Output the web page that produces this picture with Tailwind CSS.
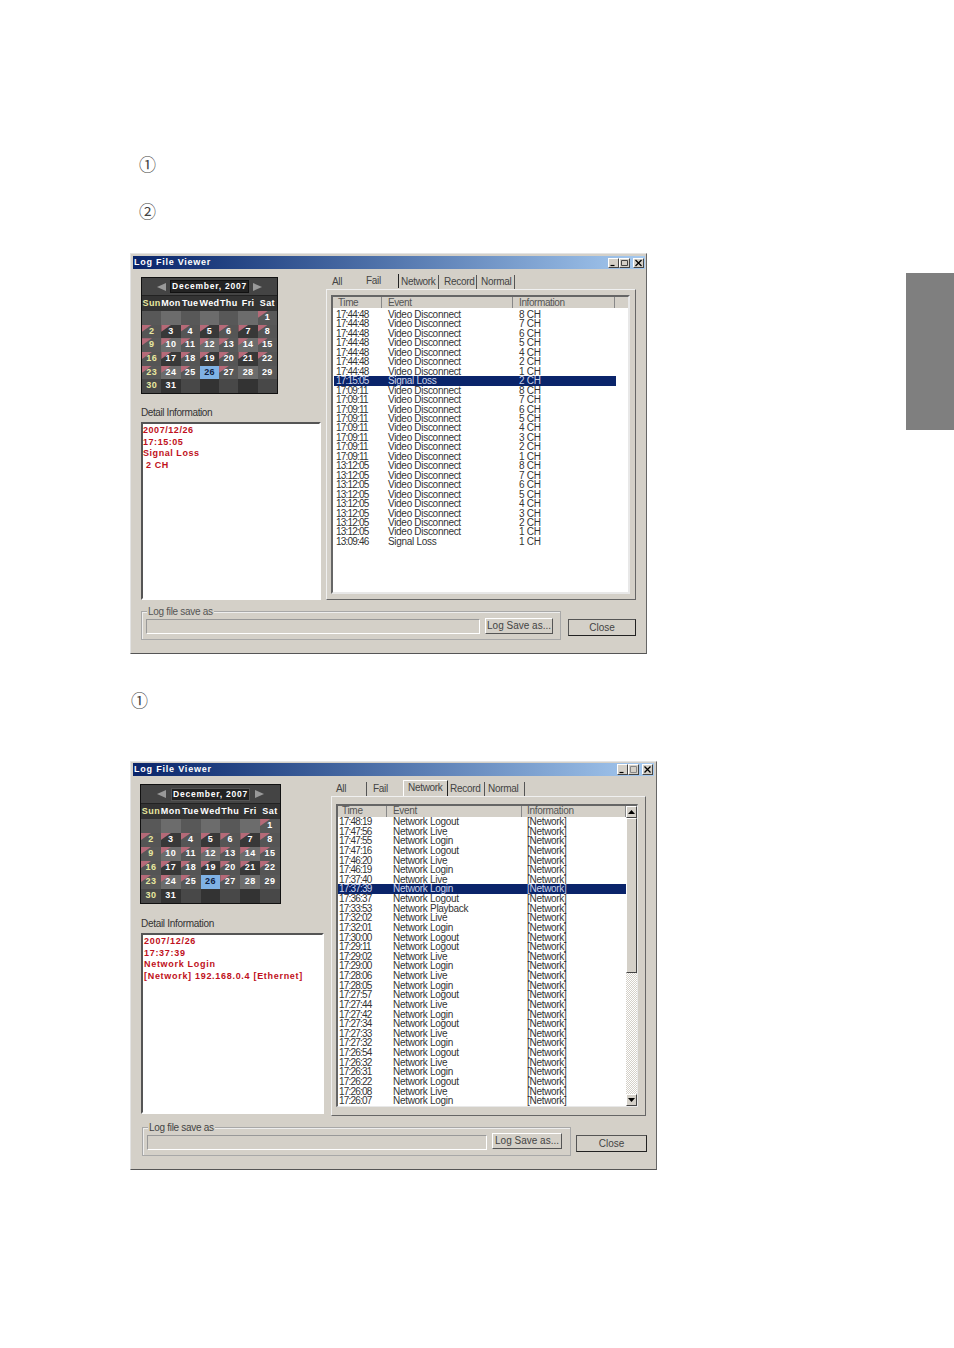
<!DOCTYPE html>
<html>
<head>
<meta charset="utf-8">
<script src="https://cdn.jsdelivr.net/npm/@tailwindcss/browser@4"></script>
<title>Log File Viewer</title>
</head>
<body class="bg-white">
<main class="relative w-[954px] h-[1348px] overflow-hidden pl-[130px] pt-[155px] font-['Liberation_Sans','Noto_Sans_CJK_JP',sans-serif] text-[10px] text-[#333]">

<aside class="absolute left-[906px] top-[273px] w-[48px] h-[157px] bg-[#7f7f7f]"></aside>

<div class="h-[22px] leading-[22px] pl-[9px] text-[17px] text-[#444]">①</div>
<div class="mt-[25px] h-[22px] leading-[22px] pl-[9px] text-[17px] text-[#444]">②</div>

<!-- WINDOW 1 -->
<section class="mt-[29px] w-[517px] h-[401px] bg-[#d4d0c8] border border-t-[#e4e4e4] border-l-[#e4e4e4] border-r-[#666] border-b-[#555] pt-[2px] pl-[2px] pr-[1px]">
  <header class="h-[13px] w-[512px] flex items-center justify-between pl-[1px] pr-[1px] bg-gradient-to-r from-[#0a246a] to-[#a6caf0] text-white text-[9px] leading-[13px] font-bold tracking-[0.75px]">
    <span>Log File Viewer</span>
    <div class="flex">
      <svg class="bg-[#d4d0c8] border border-t-white border-l-white border-r-[#444] border-b-[#444]" width="11" height="10" viewBox="0 0 9 8"><path d="M1.5 6.5h4" stroke="#000" stroke-width="1.2"/></svg>
      <svg class="bg-[#d4d0c8] border border-t-white border-l-white border-r-[#444] border-b-[#444]" width="11" height="10" viewBox="0 0 9 8"><path d="M1.5 1.5h6v5h-6z" fill="none" stroke="#444" stroke-width="1"/></svg>
      <svg class="ml-[3px] bg-[#d4d0c8] border border-t-white border-l-white border-r-[#444] border-b-[#444]" width="11" height="10" viewBox="0 0 9 8"><path d="M1.5 1l6 6M7.5 1l-6 6" stroke="#000" stroke-width="1.3"/></svg>
    </div>
  </header>

  <div class="flex gap-[5px] pl-[8px] pt-[6px]">
    <div class="w-[180px]">
      <div class="mt-[2px] w-[137px] h-[117px] border border-[#111] bg-[#333] grid grid-cols-7 grid-rows-[18px_15px_repeat(6,1fr)] text-white font-bold text-[9px] tracking-[0.35px] [&>div]:relative [&>div]:flex [&>div]:items-center [&>div]:justify-center [&>div]:whitespace-nowrap [&_i]:absolute [&_i]:left-0 [&_i]:top-0 [&_i]:w-[10px] [&_i]:h-[7px] [&_i]:bg-[#b56a78] [&_i]:[clip-path:polygon(0_0,100%_0,0_100%)]">
        <div class="col-span-7 gap-[4px] bg-[#444] border-b border-[#222] text-[8.5px]">
          <svg width="9" height="8" viewBox="0 0 9 8"><path d="M0 4l9-4v8z" fill="#999"/></svg>
          <span class="bg-[#222] border border-[#111] px-[1px] leading-[11px] tracking-[0.75px]">December, 2007</span>
          <svg width="9" height="8" viewBox="0 0 9 8"><path d="M9 4L0 0v8z" fill="#999"/></svg>
        </div>
        <div class="text-[#e8e8a0]">Sun</div><div>Mon</div><div>Tue</div><div>Wed</div><div>Thu</div><div>Fri</div><div>Sat</div>
        <div class="bg-[#585858]"></div><div class="bg-[#6c6c6c]"></div><div class="bg-[#585858]"></div><div class="bg-[#6c6c6c]"></div><div class="bg-[#585858]"></div><div class="bg-[#6c6c6c]"></div><div class="bg-[#585858]"><i></i>1</div>
        <div class="bg-[#555] text-[#e8e8a0]"><i></i>2</div><div class="bg-[#383838]"><i></i>3</div><div class="bg-[#555]"><i></i>4</div><div class="bg-[#383838]"><i></i>5</div><div class="bg-[#555]"><i></i>6</div><div class="bg-[#383838]"><i></i>7</div><div class="bg-[#555]"><i></i>8</div>
        <div class="bg-[#585858] text-[#e8e8a0]"><i></i>9</div><div class="bg-[#6c6c6c]"><i></i>10</div><div class="bg-[#585858]"><i></i>11</div><div class="bg-[#6c6c6c]"><i></i>12</div><div class="bg-[#585858]"><i></i>13</div><div class="bg-[#6c6c6c]"><i></i>14</div><div class="bg-[#585858]"><i></i>15</div>
        <div class="bg-[#555] text-[#e8e8a0]"><i></i>16</div><div class="bg-[#383838]"><i></i>17</div><div class="bg-[#555]"><i></i>18</div><div class="bg-[#383838]"><i></i>19</div><div class="bg-[#555]"><i></i>20</div><div class="bg-[#383838]"><i></i>21</div><div class="bg-[#555]"><i></i>22</div>
        <div class="bg-[#585858] text-[#e8e8a0]"><i></i>23</div><div class="bg-[#6c6c6c]"><i></i>24</div><div class="bg-[#585858]"><i></i>25</div><div class="bg-[#7fb2e5] text-[#102040]">26</div><div class="bg-[#585858]"><i></i>27</div><div class="bg-[#6c6c6c]">28</div><div class="bg-[#585858]">29</div>
        <div class="bg-[#484848] text-[#e8e8a0]">30</div><div class="bg-[#333]">31</div><div class="bg-[#484848]"></div><div class="bg-[#333]"></div><div class="bg-[#484848]"></div><div class="bg-[#333]"></div><div class="bg-[#484848]"></div>
      </div>
      <div class="mt-[12px] h-[12px] leading-[12px] tracking-[-0.4px] translate-y-[1px]">Detail Information</div>
      <div class="mt-[4px] h-[178px] border-2 border-t-[#555] border-l-[#555] border-r-white border-b-white bg-white pt-[1px] text-[#c01020] font-bold text-[9px] leading-[11.7px] tracking-[0.55px]">
        <p>2007/12/26</p><p>17:15:05</p><p>Signal Loss</p><p>&nbsp;2 CH</p>
      </div>
    </div>

    <div class="w-[310px]">
      <nav class="h-[14px] flex leading-[14px] [&>span]:h-[14px] text-[#444] tracking-[-0.3px]">
        <span class="w-[34px] pl-[6px]">All</span>
        <span class="w-[39px] pl-[6px] border-r border-[#222] -mt-[1px]">Fail</span>
        <span class="w-[40px] pl-[2px] border-r border-[#555]">Network</span>
        <span class="w-[38px] pl-[5px] border-r border-[#555]">Record</span>
        <span class="w-[38px] pl-[4px] border-r border-[#555]">Normal</span>
      </nav>
      <div class="h-[311px] border border-t-[#f0f0f0] border-l-[#f0f0f0] border-r-[#666] border-b-[#666] pl-[4px] pt-[5px]">
        <div class="w-[299px] h-[299px] bg-white border-2 border-t-[#666] border-l-[#666] border-r-[#e8e8e8] border-b-[#e8e8e8] overflow-hidden">
          <div class="h-[11px] grid grid-cols-[49px_131px_102px_1fr] leading-[11px] bg-[#d4d0c8] text-[#555] tracking-[-0.4px] [&>div]:border-r [&>div]:border-[#888]">
            <div class="pl-[5px]">Time</div><div class="pl-[6px]">Event</div><div class="pl-[6px]">Information</div><div class="border-r-0!"></div>
          </div>
          <div class="mt-[2px] ml-[1px] w-[282px] grid grid-cols-[54px_131px_1fr] auto-rows-[9.46px] leading-[9.46px] tracking-[-0.3px] [&_time]:block [&_time]:pl-[2px] [&_time]:tracking-[-0.8px]">
            <div><time>17:44:48</time></div><div>Video Disconnect</div><div>8 CH</div>
            <div><time>17:44:48</time></div><div>Video Disconnect</div><div>7 CH</div>
            <div><time>17:44:48</time></div><div>Video Disconnect</div><div>6 CH</div>
            <div><time>17:44:48</time></div><div>Video Disconnect</div><div>5 CH</div>
            <div><time>17:44:48</time></div><div>Video Disconnect</div><div>4 CH</div>
            <div><time>17:44:48</time></div><div>Video Disconnect</div><div>2 CH</div>
            <div><time>17:44:48</time></div><div>Video Disconnect</div><div>1 CH</div>
            <div class="col-span-3 grid grid-cols-subgrid bg-[#0a246a] text-[#c8d0e8]"><div><time>17:15:05</time></div><div>Signal Loss</div><div>2 CH</div></div>
            <div><time>17:09:11</time></div><div>Video Disconnect</div><div>8 CH</div>
            <div><time>17:09:11</time></div><div>Video Disconnect</div><div>7 CH</div>
            <div><time>17:09:11</time></div><div>Video Disconnect</div><div>6 CH</div>
            <div><time>17:09:11</time></div><div>Video Disconnect</div><div>5 CH</div>
            <div><time>17:09:11</time></div><div>Video Disconnect</div><div>4 CH</div>
            <div><time>17:09:11</time></div><div>Video Disconnect</div><div>3 CH</div>
            <div><time>17:09:11</time></div><div>Video Disconnect</div><div>2 CH</div>
            <div><time>17:09:11</time></div><div>Video Disconnect</div><div>1 CH</div>
            <div><time>13:12:05</time></div><div>Video Disconnect</div><div>8 CH</div>
            <div><time>13:12:05</time></div><div>Video Disconnect</div><div>7 CH</div>
            <div><time>13:12:05</time></div><div>Video Disconnect</div><div>6 CH</div>
            <div><time>13:12:05</time></div><div>Video Disconnect</div><div>5 CH</div>
            <div><time>13:12:05</time></div><div>Video Disconnect</div><div>4 CH</div>
            <div><time>13:12:05</time></div><div>Video Disconnect</div><div>3 CH</div>
            <div><time>13:12:05</time></div><div>Video Disconnect</div><div>2 CH</div>
            <div><time>13:12:05</time></div><div>Video Disconnect</div><div>1 CH</div>
            <div><time>13:09:46</time></div><div>Signal Loss</div><div>1 CH</div>
          </div>
        </div>
      </div>
    </div>
  </div>

  <div class="flex gap-[7px] pl-[8px] mt-[11px]">
    <fieldset class="relative w-[420px] h-[29px] border border-[#a8a8a8] shadow-[inset_1px_1px_0_#eee] flex gap-[5px] pl-[4px] pt-[7px]">
      <span class="absolute left-[5px] -top-[6px] px-[1px] bg-[#d4d0c8] leading-[11px] text-[#555] tracking-[-0.3px]">Log file save as</span>
      <div class="w-[334px] h-[15px] border border-t-[#999] border-l-[#999] border-r-white border-b-white"></div>
      <div class="-mt-[1px] w-[68px] h-[16px] border border-t-white border-l-white border-r-[#555] border-b-[#555] text-center leading-[14px] whitespace-nowrap text-[#444]">Log Save as...</div>
    </fieldset>
    <div class="mt-[8px] w-[68px] h-[17px] border border-[#222] border-t-[#555] border-l-[#555] text-center leading-[15px] text-[#444]">Close</div>
  </div>
</section>

<div class="mt-[37px] ml-[1px] h-[22px] leading-[22px] text-[17px] text-[#444]">①</div>

<!-- WINDOW 2 -->
<section class="mt-[48px] w-[527px] h-[409px] bg-[#d4d0c8] border border-t-[#e4e4e4] border-l-[#e4e4e4] border-r-[#666] border-b-[#555] pt-[1px] pl-[2px] pr-[1px]">
  <header class="h-[13px] w-[521px] flex items-center justify-between pl-[1px] pr-[1px] bg-gradient-to-r from-[#0a246a] to-[#a6caf0] text-white text-[9px] leading-[13px] font-bold tracking-[0.8px]">
    <span>Log File Viewer</span>
    <div class="flex">
      <svg class="bg-[#d4d0c8] border border-t-white border-l-white border-r-[#444] border-b-[#444]" width="11" height="11" viewBox="0 0 9 9"><path d="M1.5 7.5h4" stroke="#000" stroke-width="1.2"/></svg>
      <svg class="bg-[#d4d0c8] border border-t-white border-l-white border-r-[#444] border-b-[#444]" width="11" height="11" viewBox="0 0 9 9"><path d="M1.5 1.5h6v6h-6z" fill="none" stroke="#888" stroke-width="1"/></svg>
      <svg class="ml-[3px] bg-[#d4d0c8] border border-t-white border-l-white border-r-[#444] border-b-[#444]" width="11" height="11" viewBox="0 0 9 9"><path d="M1.5 1.5l6 6M7.5 1.5l-6 6" stroke="#000" stroke-width="1.3"/></svg>
    </div>
  </header>

  <div class="flex gap-[7px] pl-[7px] pt-[6px]">
    <div class="w-[184px]">
      <div class="mt-[2px] w-[141px] h-[120px] border border-[#111] bg-[#333] grid grid-cols-7 grid-rows-[19px_15px_repeat(6,1fr)] text-white font-bold text-[9px] tracking-[0.5px] [&>div]:relative [&>div]:flex [&>div]:items-center [&>div]:justify-center [&>div]:whitespace-nowrap [&_i]:absolute [&_i]:left-0 [&_i]:top-0 [&_i]:w-[10px] [&_i]:h-[7px] [&_i]:bg-[#b56a78] [&_i]:[clip-path:polygon(0_0,100%_0,0_100%)]">
        <div class="col-span-7 gap-[5px] bg-[#444] border-b border-[#222] text-[8.5px]">
          <svg width="9" height="8" viewBox="0 0 9 8"><path d="M0 4l9-4v8z" fill="#999"/></svg>
          <span class="bg-[#222] border border-[#555] px-[1px] leading-[11px] tracking-[0.75px]">December, 2007</span>
          <svg width="9" height="8" viewBox="0 0 9 8"><path d="M9 4L0 0v8z" fill="#999"/></svg>
        </div>
        <div class="text-[#e8e8a0]">Sun</div><div>Mon</div><div>Tue</div><div>Wed</div><div>Thu</div><div>Fri</div><div>Sat</div>
        <div class="bg-[#585858]"></div><div class="bg-[#6c6c6c]"></div><div class="bg-[#585858]"></div><div class="bg-[#6c6c6c]"></div><div class="bg-[#585858]"></div><div class="bg-[#6c6c6c]"></div><div class="bg-[#585858]"><i></i>1</div>
        <div class="bg-[#555] text-[#e8e8a0]"><i></i>2</div><div class="bg-[#383838]"><i></i>3</div><div class="bg-[#555]"><i></i>4</div><div class="bg-[#383838]"><i></i>5</div><div class="bg-[#555]"><i></i>6</div><div class="bg-[#383838]"><i></i>7</div><div class="bg-[#555]"><i></i>8</div>
        <div class="bg-[#585858] text-[#e8e8a0]"><i></i>9</div><div class="bg-[#6c6c6c]"><i></i>10</div><div class="bg-[#585858]"><i></i>11</div><div class="bg-[#6c6c6c]"><i></i>12</div><div class="bg-[#585858]"><i></i>13</div><div class="bg-[#6c6c6c]"><i></i>14</div><div class="bg-[#585858]"><i></i>15</div>
        <div class="bg-[#555] text-[#e8e8a0]"><i></i>16</div><div class="bg-[#383838]"><i></i>17</div><div class="bg-[#555]"><i></i>18</div><div class="bg-[#383838]"><i></i>19</div><div class="bg-[#555]"><i></i>20</div><div class="bg-[#383838]"><i></i>21</div><div class="bg-[#555]"><i></i>22</div>
        <div class="bg-[#585858] text-[#e8e8a0]"><i></i>23</div><div class="bg-[#6c6c6c]"><i></i>24</div><div class="bg-[#585858]"><i></i>25</div><div class="bg-[#7fb2e5] text-[#102040]">26</div><div class="bg-[#585858]"><i></i>27</div><div class="bg-[#6c6c6c]">28</div><div class="bg-[#585858]">29</div>
        <div class="bg-[#484848] text-[#e8e8a0]">30</div><div class="bg-[#333]">31</div><div class="bg-[#484848]"></div><div class="bg-[#333]"></div><div class="bg-[#484848]"></div><div class="bg-[#333]"></div><div class="bg-[#484848]"></div>
      </div>
      <div class="mt-[13px] ml-[1px] h-[12px] leading-[12px] tracking-[-0.3px] translate-y-[1px]">Detail Information</div>
      <div class="mt-[4px] ml-[1px] w-[183px] h-[181px] border-2 border-t-[#555] border-l-[#555] border-r-white border-b-white bg-white pl-[1px] pt-[1px] text-[#c01020] font-bold text-[9px] leading-[11.7px] tracking-[0.7px]">
        <p>2007/12/26</p><p>17:37:39</p><p>Network Login</p><p>[Network] 192.168.0.4 [Ethernet]</p>
      </div>
    </div>

    <div class="w-[315px]">
      <nav class="h-[14px] flex leading-[14px] [&>span]:h-[14px] text-[#444] tracking-[-0.3px]">
        <span class="w-[36px] pl-[5px] border-r border-[#555]">All</span>
        <span class="w-[36px] pl-[6px]">Fail</span>
        <span class="w-[45px] h-[16px]! -mt-[2px] pl-[4px] border-t border-l border-r border-t-white border-l-white border-r-[#222] bg-[#d4d0c8] relative z-10">Network</span>
        <span class="w-[37px] pl-[2px] border-r border-[#555]">Record</span>
        <span class="w-[40px] pl-[3px] border-r border-[#555]">Normal</span>
      </nav>
      <div class="h-[320px] border border-t-[#f0f0f0] border-l-[#f0f0f0] border-r-[#666] border-b-[#666] pl-[4px] pt-[7px]">
        <div class="w-[302px] h-[303px] flex bg-white border-2 border-t-[#666] border-l-[#666] border-r-[#e8e8e8] border-r-1 border-b-1 border-b-[#e8e8e8] overflow-hidden">
          <div class="w-[288px] shrink-0 overflow-hidden">
            <div class="h-[11px] grid grid-cols-[49px_135px_104px] leading-[10px] bg-[#d4d0c8] text-[#555] tracking-[-0.3px] [&>div]:border-r [&>div]:border-[#888]">
              <div class="pl-[4px]">Time</div><div class="pl-[6px]">Event</div><div class="pl-[5px]">Information</div>
            </div>
            <div class="grid grid-cols-[55px_134px_1fr] auto-rows-[9.64px] leading-[9.64px] [&_time]:block [&_time]:pl-[1px] [&_time]:tracking-[-0.8px] tracking-[-0.3px]">
              <div><time>17:48:19</time></div><div>Network Logout</div><div>[Network]</div>
              <div><time>17:47:56</time></div><div>Network Live</div><div>[Network]</div>
              <div><time>17:47:55</time></div><div>Network Login</div><div>[Network]</div>
              <div><time>17:47:16</time></div><div>Network Logout</div><div>[Network]</div>
              <div><time>17:46:20</time></div><div>Network Live</div><div>[Network]</div>
              <div><time>17:46:19</time></div><div>Network Login</div><div>[Network]</div>
              <div><time>17:37:40</time></div><div>Network Live</div><div>[Network]</div>
              <div class="col-span-3 grid grid-cols-subgrid bg-[#0a246a] text-[#c8d0e8]"><div><time>17:37:39</time></div><div>Network Login</div><div>[Network]</div></div>
              <div><time>17:36:37</time></div><div>Network Logout</div><div>[Network]</div>
              <div><time>17:33:53</time></div><div>Network Playback</div><div>[Network]</div>
              <div><time>17:32:02</time></div><div>Network Live</div><div>[Network]</div>
              <div><time>17:32:01</time></div><div>Network Login</div><div>[Network]</div>
              <div><time>17:30:00</time></div><div>Network Logout</div><div>[Network]</div>
              <div><time>17:29:11</time></div><div>Network Logout</div><div>[Network]</div>
              <div><time>17:29:02</time></div><div>Network Live</div><div>[Network]</div>
              <div><time>17:29:00</time></div><div>Network Login</div><div>[Network]</div>
              <div><time>17:28:06</time></div><div>Network Live</div><div>[Network]</div>
              <div><time>17:28:05</time></div><div>Network Login</div><div>[Network]</div>
              <div><time>17:27:57</time></div><div>Network Logout</div><div>[Network]</div>
              <div><time>17:27:44</time></div><div>Network Live</div><div>[Network]</div>
              <div><time>17:27:42</time></div><div>Network Login</div><div>[Network]</div>
              <div><time>17:27:34</time></div><div>Network Logout</div><div>[Network]</div>
              <div><time>17:27:33</time></div><div>Network Live</div><div>[Network]</div>
              <div><time>17:27:32</time></div><div>Network Login</div><div>[Network]</div>
              <div><time>17:26:54</time></div><div>Network Logout</div><div>[Network]</div>
              <div><time>17:26:32</time></div><div>Network Live</div><div>[Network]</div>
              <div><time>17:26:31</time></div><div>Network Login</div><div>[Network]</div>
              <div><time>17:26:22</time></div><div>Network Logout</div><div>[Network]</div>
              <div><time>17:26:08</time></div><div>Network Live</div><div>[Network]</div>
              <div><time>17:26:07</time></div><div>Network Login</div><div>[Network]</div>
            </div>
          </div>
          <div class="w-[11px] shrink-0 flex flex-col">
            <div class="h-[12px] flex items-center justify-center bg-[#d4d0c8] border border-t-white border-l-white border-r-[#444] border-b-[#444]"><svg width="7" height="4" viewBox="0 0 7 4"><path d="M3.5 0L7 4H0z" fill="#000"/></svg></div>
            <div class="h-[155px] bg-[#d4d0c8] border border-t-white border-l-white border-r-[#444] border-b-[#444]"></div>
            <div class="flex-1 bg-[repeating-conic-gradient(#fff_0_25%,#d4d0c8_0_50%)] [background-size:2px_2px]"></div>
            <div class="h-[12px] flex items-center justify-center bg-[#d4d0c8] border border-t-white border-l-white border-r-[#444] border-b-[#444]"><svg width="7" height="4" viewBox="0 0 7 4"><path d="M3.5 4L7 0H0z" fill="#000"/></svg></div>
          </div>
        </div>
      </div>
    </div>
  </div>

  <div class="flex gap-[5px] pl-[9px] mt-[11px]">
    <fieldset class="relative w-[429px] h-[29px] border border-[#a8a8a8] shadow-[inset_1px_1px_0_#eee] flex gap-[5px] pl-[4px] pt-[7px]">
      <span class="absolute left-[5px] -top-[6px] px-[1px] bg-[#d4d0c8] leading-[11px] text-[#444] tracking-[-0.3px]">Log file save as</span>
      <div class="w-[340px] h-[15px] border border-t-[#999] border-l-[#999] border-r-white border-b-white"></div>
      <div class="-mt-[2px] w-[70px] h-[16px] border border-t-white border-l-white border-r-[#555] border-b-[#555] text-center leading-[14px] whitespace-nowrap text-[#444]">Log Save as...</div>
    </fieldset>
    <div class="mt-[8px] w-[71px] h-[17px] border border-[#222] border-t-[#555] border-l-[#555] text-center leading-[15px] text-[#444]">Close</div>
  </div>
</section>
</main>
</body>
</html>
